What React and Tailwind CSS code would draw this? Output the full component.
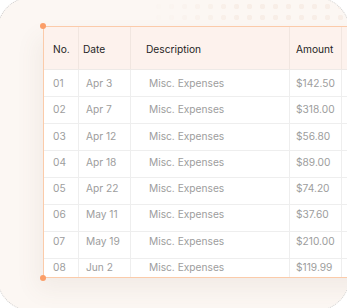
import React from 'react';

const rows = [
  ['01', 'Apr 3', '$142.50'],
  ['02', 'Apr 7', '$318.00'],
  ['03', 'Apr 12', '$56.80'],
  ['04', 'Apr 18', '$89.00'],
  ['05', 'Apr 22', '$74.20'],
  ['06', 'May 11', '$37.60'],
  ['07', 'May 19', '$210.00'],
  ['08', 'Jun 2', '$119.99'],
];

const cols = 'grid grid-cols-[35px_52px_159px_52px_80px]';

export default function App() {
  return (
    <div className="w-[347px] h-[308px] bg-white overflow-hidden" style={{ fontFamily: 'Inter, "Noto Sans", sans-serif' }}>
      <div className="relative -m-[3px] w-[353px] h-[314px] rounded-[34px] border border-dotted border-[#cfcfcf] bg-[#fcf7f3] overflow-hidden">
        {/* faint dot pattern at top */}
        <div className="absolute top-[3px] left-[150px] right-0 h-[22px] bg-[radial-gradient(circle,#f8eee7_2.6px,transparent_3px)] bg-[length:13px_11px] bg-[position:4px_0px] [mask-image:linear-gradient(to_right,transparent,black_45%)]" />

        <div className="relative pl-[45px] pt-[28px]">
          <div className="relative w-[400px] h-[252px] border-t border-l border-b border-[#fbcbaa] bg-white shadow-[-6px_12px_22px_rgba(120,90,70,0.07)] overflow-hidden text-[10.2px]">
            {/* header */}
            <div className={`${cols} h-[43px] bg-[#fdf2ed] border-b border-[#eeeae7] text-[#1f1f1f]`}>
              <div className="flex items-center pt-[4px] pl-[9px] border-r border-[#f1e6e0]">No.</div>
              <div className="flex items-center pt-[4px] pl-[4px] border-r border-[#f1e6e0]">Date</div>
              <div className="flex items-center pt-[4px] pl-[15px] border-r border-[#f1e6e0]">Description</div>
              <div className="flex items-center pt-[4px] pl-[6px] border-r border-[#f1e6e0]">Amount</div>
              <div />
            </div>
            {rows.map((r, i) => (
              <div key={r[0]} className={`${cols} h-[27px] border-b border-[#eeeeee] text-[#9d9d9d]`}>
                {[
                  [r[0], 'pl-[9px]'],
                  [r[1], 'pl-[7px]'],
                  ['Misc. Expenses', 'pl-[18px]'],
                  [r[2], 'pl-[6px]'],
                ].map(([t, pad], j) => (
                  <div key={j} className={`flex items-center border-r border-[#eeeeee] ${pad}`}>
                    <span style={{ transform: `translateY(${1 - i * 0.75}px)` }}>{t}</span>
                  </div>
                ))}
                <div />
              </div>
            ))}
          </div>
          <span className="absolute left-[42px] top-[25px] w-[6px] h-[6px] rounded-full bg-[#fb9e68]" />
          <span className="absolute left-[42px] top-[277px] w-[6px] h-[6px] rounded-full bg-[#fb9e68]" />
        </div>
      </div>
    </div>
  );
}
